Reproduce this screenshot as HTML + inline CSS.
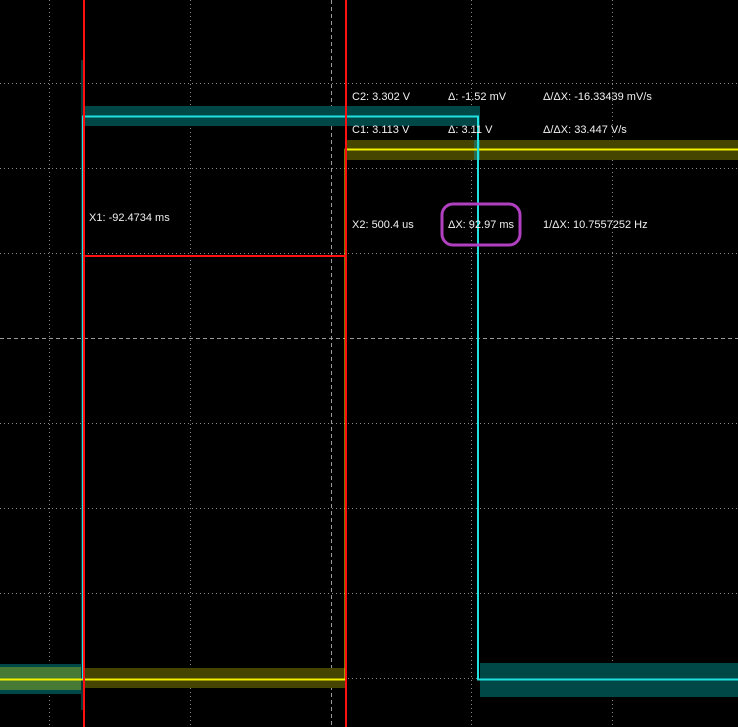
<!DOCTYPE html>
<html><head><meta charset="utf-8"><style>
html,body{margin:0;padding:0;background:#000;width:738px;height:727px;overflow:hidden}
text{font-family:"Liberation Sans",sans-serif;font-size:11px;fill:#f0f0f0}
</style></head><body>
<svg width="738" height="727" viewBox="0 0 738 727" xmlns="http://www.w3.org/2000/svg">
<rect width="738" height="727" fill="#000"/>
<g stroke="#8a8a8a" stroke-width="1" stroke-dasharray="1,3">
<line x1="49.5" y1="0" x2="49.5" y2="727"/><line x1="190.5" y1="0" x2="190.5" y2="727"/>
<line x1="471.5" y1="0" x2="471.5" y2="727"/><line x1="612.5" y1="0" x2="612.5" y2="727"/>
<line x1="0" y1="83.5" x2="738" y2="83.5"/><line x1="0" y1="168.5" x2="738" y2="168.5"/>
<line x1="0" y1="253.5" x2="738" y2="253.5"/><line x1="0" y1="423.5" x2="738" y2="423.5"/>
<line x1="0" y1="508.5" x2="738" y2="508.5"/><line x1="0" y1="593.5" x2="738" y2="593.5"/>
<line x1="0" y1="678.5" x2="738" y2="678.5"/>
</g>
<g stroke="#9a9a9a" stroke-width="1" stroke-dasharray="4,3">
<line x1="331.5" y1="0" x2="331.5" y2="727"/><line x1="0" y1="338.5" x2="738" y2="338.5"/>
</g>
<rect x="0" y="664" width="83" height="30" fill="#004848"/>
<rect x="0" y="667" width="83" height="23" fill="#467a35"/>
<rect x="85" y="668" width="261" height="20" fill="#454500"/>
<rect x="85" y="106" width="395" height="20" fill="#004848"/>
<rect x="346" y="140" width="392" height="20" fill="#454500"/>
<rect x="474" y="140" width="6" height="20" fill="#2a6a50"/>
<rect x="480" y="663" width="258" height="34" fill="#004848"/>
<rect x="81" y="60" width="3" height="650" fill="#0a3838"/>
<polyline points="0,679.5 345.5,679.5 345.5,149.5 738,149.5" fill="none" stroke="#f0f000" stroke-width="2"/>
<polyline points="83,679 83,116.5 478,116.5 478,679.5 738,679.5" fill="none" stroke="#20e0e0" stroke-width="2"/>
<g fill="#ff1010">
<rect x="83" y="0" width="2" height="727"/><rect x="345" y="0" width="2" height="727"/>
<rect x="84" y="255" width="262" height="2"/>
</g>
<text x="89" y="221">X1: -92.4734 ms</text>
<text x="352" y="100">C2: 3.302 V</text><text x="448" y="100">Δ: -1.52 mV</text><text x="543" y="100">Δ/ΔX: -16.33439 mV/s</text>
<text x="352" y="133">C1: 3.113 V</text><text x="448" y="133">Δ: 3.11 V</text><text x="543" y="133">Δ/ΔX: 33.447 V/s</text>
<text x="352" y="228">X2: 500.4 us</text><text x="448" y="228">ΔX: 92.97 ms</text><text x="543" y="228">1/ΔX: 10.7557252 Hz</text>
<rect x="442" y="204" width="78" height="41" rx="11" fill="none" stroke="#b040c0" stroke-width="3"/>
</svg>
</body></html>
